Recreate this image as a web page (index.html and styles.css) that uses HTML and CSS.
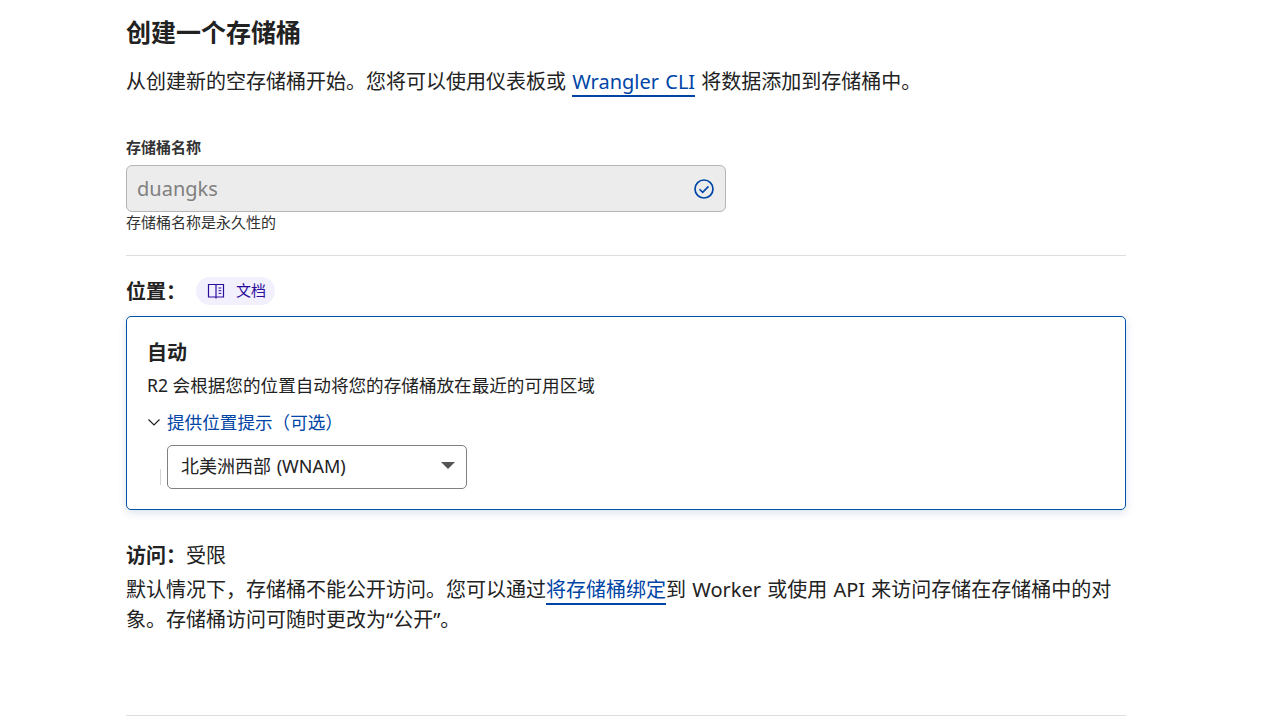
FILE: index.html
```html
<!DOCTYPE html>
<html lang="zh-CN">
<head>
<meta charset="utf-8">
<title>创建一个存储桶</title>
<link rel="stylesheet" href="styles.css">
</head>
<body>
<main class="page">
  <h1 class="title">创建一个存储桶</h1>
  <p class="intro">从创建新的空存储桶开始。您将可以使用仪表板或 <a class="link" href="#">Wrangler CLI</a> 将数据添加到存储桶中。</p>

  <section class="name-field">
    <div class="field-label">存储桶名称</div>
    <div class="input">
      <span class="input-value">duangks</span>
      <svg class="check" width="22" height="22" viewBox="0 0 22 22" fill="none"><circle cx="11" cy="11" r="9" stroke="#0045a6" stroke-width="1.7"/><path d="M6.500 11.200l3.200 3.200 5.800-6" stroke="#0045a6" stroke-width="1.600"/></svg>
    </div>
    <div class="field-help">存储桶名称是永久性的</div>
  </section>

  <section class="location">
    <div class="heading-row">
      <h2 class="subtitle">位置：</h2>
      <a class="pill" href="#">
        <svg width="18" height="18" viewBox="0 0 18 18" fill="none" stroke="#2b0d9e" stroke-width="1.200"><path d="M9 2.500H1.500v12.500H9m0-12.500h7.500v12.500H9m0-12.500v14"/><path d="M11.500 6h2.800M11.500 8.700h2.800M11.500 11.400h2.800" stroke-width="1"/></svg>
        <span class="pill-text">文档</span>
      </a>
    </div>
    <div class="card">
      <h3 class="card-title">自动</h3>
      <p class="card-text">R2 会根据您的位置自动将您的存储桶放在最近的可用区域</p>
      <div class="hint-toggle">
        <svg width="14" height="14" viewBox="0 0 14 14" fill="none" stroke="#222" stroke-width="1.2"><path d="M1.500 4.500l5.500 5.500 5.500-5.500"/></svg>
        <a class="hint-link" href="#">提供位置提示（可选）</a>
      </div>
      <div class="hint-body">
        <div class="select">
          <span>北美洲西部 (WNAM)</span>
          <span class="caret"></span>
        </div>
      </div>
    </div>
  </section>

  <section class="access">
    <div class="access-heading"><strong>访问：</strong>受限</div>
    <p class="access-text">默认情况下，存储桶不能公开访问。您可以通过<a class="link" href="#">将存储桶绑定</a>到 Worker 或使用 API 来访问存储在存储桶中的对象。存储桶访问可随时更改为“公开”。</p>
  </section>

  <hr class="bottom-rule">
</main>
</body>
</html>
```
FILE: styles.css
```css
html, body { margin: 0; padding: 0; background: #fff; overflow: hidden; }
body {
  height: 725px;
  font-family: "Noto Sans", "Noto Sans CJK SC", sans-serif;
  color: #222;
}
.page { width: 1000px; margin-left: 126px; padding-top: 14px; }
.title { margin: 0; font-size: 25px; line-height: 36px; font-weight: 700; color: #222; }
.intro { margin: 17px 0 0; font-size: 20px; line-height: 30px; word-spacing: 1px; color: #222; }
.link { color: #0045a6; text-decoration: none; border-bottom: 2px solid #0045a6; }
.name-field { margin-top: 40px; }
.field-label { font-size: 15px; line-height: 20px; font-weight: 700; color: #333; }
.input {
  box-sizing: border-box; width: 600px; height: 47px; margin-top: 8px;
  display: flex; align-items: center; justify-content: space-between;
  padding: 0 10px; background: #ececec; border: 1px solid #b5b5b5; border-radius: 6px;
}
.input-value { font-size: 20px; color: #808080; }
.check { display: block; }
.field-help { font-size: 15px; line-height: 20px; margin-top: 0; color: #333; }
.location { margin-top: 23px; border-top: 1px solid #dedede; padding-top: 21px; }
.heading-row { display: flex; align-items: center; gap: 10px; height: 28px; }
.subtitle { margin: 0; padding-top: 1px; font-size: 20px; line-height: 28px; font-weight: 700; }
.pill {
  display: flex; align-items: center; gap: 11px; height: 28px; padding: 0 9px 0 11px;
  background: #f2f0fd; border-radius: 14px; font-size: 15px; color: #2b0d9e; text-decoration: none;
}
.pill-text { padding-bottom: 3px; }
.card {
  box-sizing: border-box; height: 194px; margin-top: 11px; padding: 21px 20px 20px;
  border: 1px solid #0051a8; border-radius: 5px; background: #fff;
  box-shadow: 0 3px 8px rgba(0, 50, 120, .14);
}
.card-title { margin: 0; font-size: 20px; line-height: 30px; font-weight: 700; }
.card-text { margin: 4px 0 0; font-size: 17.6px; line-height: 26px; }
.hint-toggle { display: flex; align-items: center; gap: 6px; margin-top: 11px; height: 26px; }
.hint-link { font-size: 17.6px; line-height: 26px; color: #0045a6; text-decoration: none; }
.hint-body { margin: 10px 0 0 13px; padding-left: 7px; position: relative; }
.hint-body::before { content: ""; position: absolute; left: 0; top: 24px; height: 16px; border-left: 1px solid #d4d4d4; }
.select {
  box-sizing: border-box; width: 300px; height: 44px; display: flex; align-items: center; justify-content: space-between;
  padding: 0 11px 4px 13px; border: 1px solid #808080; border-radius: 5px; font-size: 18px; word-spacing: 1px; background: #fff;
}
.caret { width: 0; height: 0; border-left: 7px solid transparent; border-right: 7px solid transparent; border-top: 7px solid #555; }
.access { margin-top: 31px; }
.access-heading { font-size: 20px; line-height: 30px; }
.access-text { margin: 4px 0 0; font-size: 20px; line-height: 30px; word-spacing: 1px; }
.bottom-rule { margin: 80px 0 0; border: 0; border-top: 1px solid #dedede; }
```
